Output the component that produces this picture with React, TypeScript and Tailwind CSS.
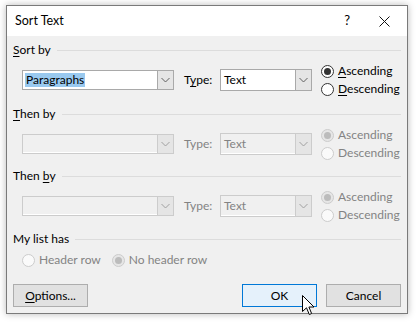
import React from "react";

const font = { fontFamily: "Lato, 'Noto Sans', 'Liberation Sans', sans-serif" };

function Chevron({ disabled }: { disabled?: boolean }) {
  return (
    <svg width="9" height="6" viewBox="0 0 9 6" className="block">
      <path d="M0.5 1 L4.5 5 L8.5 1" fill="none" stroke={disabled ? "#a0a0a0" : "#606060"} strokeWidth="1" />
    </svg>
  );
}

function Combo({
  width,
  value,
  disabled,
  selected,
  height = 20,
}: {
  width: number;
  value?: string;
  disabled?: boolean;
  selected?: boolean;
  height?: number;
}) {
  return (
    <div
      className={`flex shrink-0 border ${disabled ? "border-[#cccccc] bg-[#f0f0f0]" : "border-[#a9a9a9] bg-white"}`}
      style={{ width, height }}
    >
      <div className={`flex flex-1 items-center pl-[2px] ${disabled ? "border-b border-white" : ""}`}>
        {value && (
          <span
            className={`px-[1px] leading-[14px] ${selected ? "bg-[#99c9ef] text-[#000020]" : ""} ${disabled ? "text-[#838383]" : "text-black"}`}
          >
            {value}
          </span>
        )}
      </div>
      <div
        className={`flex w-[16px] items-center justify-center border-l ${disabled ? "border-[#cccccc] bg-[#e5e5e5]" : "border-[#a9a9a9] bg-[#e5e5e5]"}`}
      >
        <Chevron disabled={disabled} />
      </div>
    </div>
  );
}

function Radio({
  label,
  checked,
  disabled,
  ul,
}: {
  label: string;
  checked?: boolean;
  disabled?: boolean;
  ul?: boolean;
}) {
  return (
    <div className="flex h-[18px] items-center gap-[4px]">
      <div
        className={`flex h-[13px] w-[13px] shrink-0 items-center justify-center rounded-full border ${disabled ? (checked ? "border-[#cccccc] bg-[#e6e6e6]" : "border-[#cccccc] bg-[#fafafa]") : "border-[#333333] bg-white"}`}
      >
        {checked && (
          <div className={`h-[7px] w-[7px] rounded-full ${disabled ? "bg-[#bcbcbc]" : "bg-[#333333]"}`} />
        )}
      </div>
      <span className={disabled ? "text-[#838383]" : "text-black"}>
        {ul ? (
          <>
            <span className="underline underline-offset-2">{label[0]}</span>
            {label.slice(1)}
          </>
        ) : (
          label
        )}
      </span>
    </div>
  );
}

function SectionLabel({ children }: { children: React.ReactNode }) {
  return (
    <div className="flex h-[16px] items-center">
      <span className="shrink-0 text-black">{children}</span>
      <div className="ml-[6px] h-px flex-1 bg-[#dcdcdc]" />
    </div>
  );
}

function SortRow({ disabled, first }: { disabled?: boolean; first?: boolean }) {
  return (
    <div className="mt-[4px] flex h-[36px] items-center pl-[9px]">
      <Combo width={152} value={first ? "Paragraphs" : undefined} selected={first} disabled={disabled} />
      <span className={`ml-[10px] w-[36px] ${disabled ? "text-[#838383]" : "text-black"}`}>
        {first ? (
          <>
            T<span className="underline underline-offset-2">y</span>pe:
          </>
        ) : (
          "Type:"
        )}
      </span>
      <Combo width={92} height={22} value="Text" disabled={disabled} />
      <div className="ml-[9px] flex flex-col">
        <Radio label="Ascending" checked disabled={disabled} ul={!disabled} />
        <Radio label="Descending" disabled={disabled} ul={!disabled} />
      </div>
    </div>
  );
}

function Button({ children, hot, width = 75 }: { children: React.ReactNode; hot?: boolean; width?: number }) {
  return (
    <div
      className={`flex h-[23px] items-center justify-center border text-black ${hot ? "border-[#0078d7] bg-[#e5f1fb]" : "border-[#adadad] bg-[#e1e1e1]"}`}
      style={{ width }}
    >
      {children}
    </div>
  );
}

export default function App() {
  return (
    <div className="relative h-[323px] w-[417px] overflow-hidden bg-white text-[12px]" style={font}>
      <div className="ml-[6px] mt-[5px] flex h-[309px] w-[402px] flex-col border border-[#7a7a7a] bg-[#f0f0f0] shadow-[0_0_7px_rgba(0,0,0,0.28)]">
        <div className="flex h-[30px] items-center bg-white">
          <span className="ml-[8px] text-[12.5px] text-black">Sort Text</span>
          <span className="ml-auto mr-[29px] text-[13px] text-black">?</span>
          <svg width="11" height="11" viewBox="0 0 11 11" className="mr-[17px]">
            <path d="M0.5 0.5 L10.5 10.5 M10.5 0.5 L0.5 10.5" stroke="#111" strokeWidth="1" />
          </svg>
        </div>
        <div className="flex flex-1 flex-col pl-[6px] pr-[6px] pt-[6px]">
          <SectionLabel>
            <span className="underline underline-offset-2">S</span>ort by
          </SectionLabel>
          <SortRow first />
          <div className="mt-[8px]">
            <SectionLabel>
              <span className="underline underline-offset-2">T</span>hen by
            </SectionLabel>
          </div>
          <SortRow disabled />
          <div className="mt-[6px]">
            <SectionLabel>
              Then <span className="underline underline-offset-2">b</span>y
            </SectionLabel>
          </div>
          <SortRow disabled />
          <div className="mt-[7px]">
            <SectionLabel>My list has</SectionLabel>
          </div>
          <div className="mt-[4px] flex items-center pl-[9px]">
            <Radio label="Header row" disabled />
            <div className="ml-[11px]">
              <Radio label="No header row" checked disabled />
            </div>
          </div>
          <div className="mt-[15px] flex items-center">
            <Button width={75}>
              <span>
                <span className="underline underline-offset-2">O</span>ptions...
              </span>
            </Button>
            <div className="ml-auto flex gap-[9px]">
              <Button hot>OK</Button>
              <Button>Cancel</Button>
            </div>
          </div>
        </div>
      </div>
      <svg
        className="absolute left-[302px] top-[295px]"
        width="13"
        height="21"
        viewBox="0 0 13 21"
      >
        <path
          d="M0.5 0.5 L0.5 16.5 L4.5 12.8 L7.3 19.5 L9.6 18.5 L6.9 12 L12 12 Z"
          fill="white"
          stroke="black"
          strokeWidth="1"
          strokeLinejoin="miter"
        />
      </svg>
    </div>
  );
}
